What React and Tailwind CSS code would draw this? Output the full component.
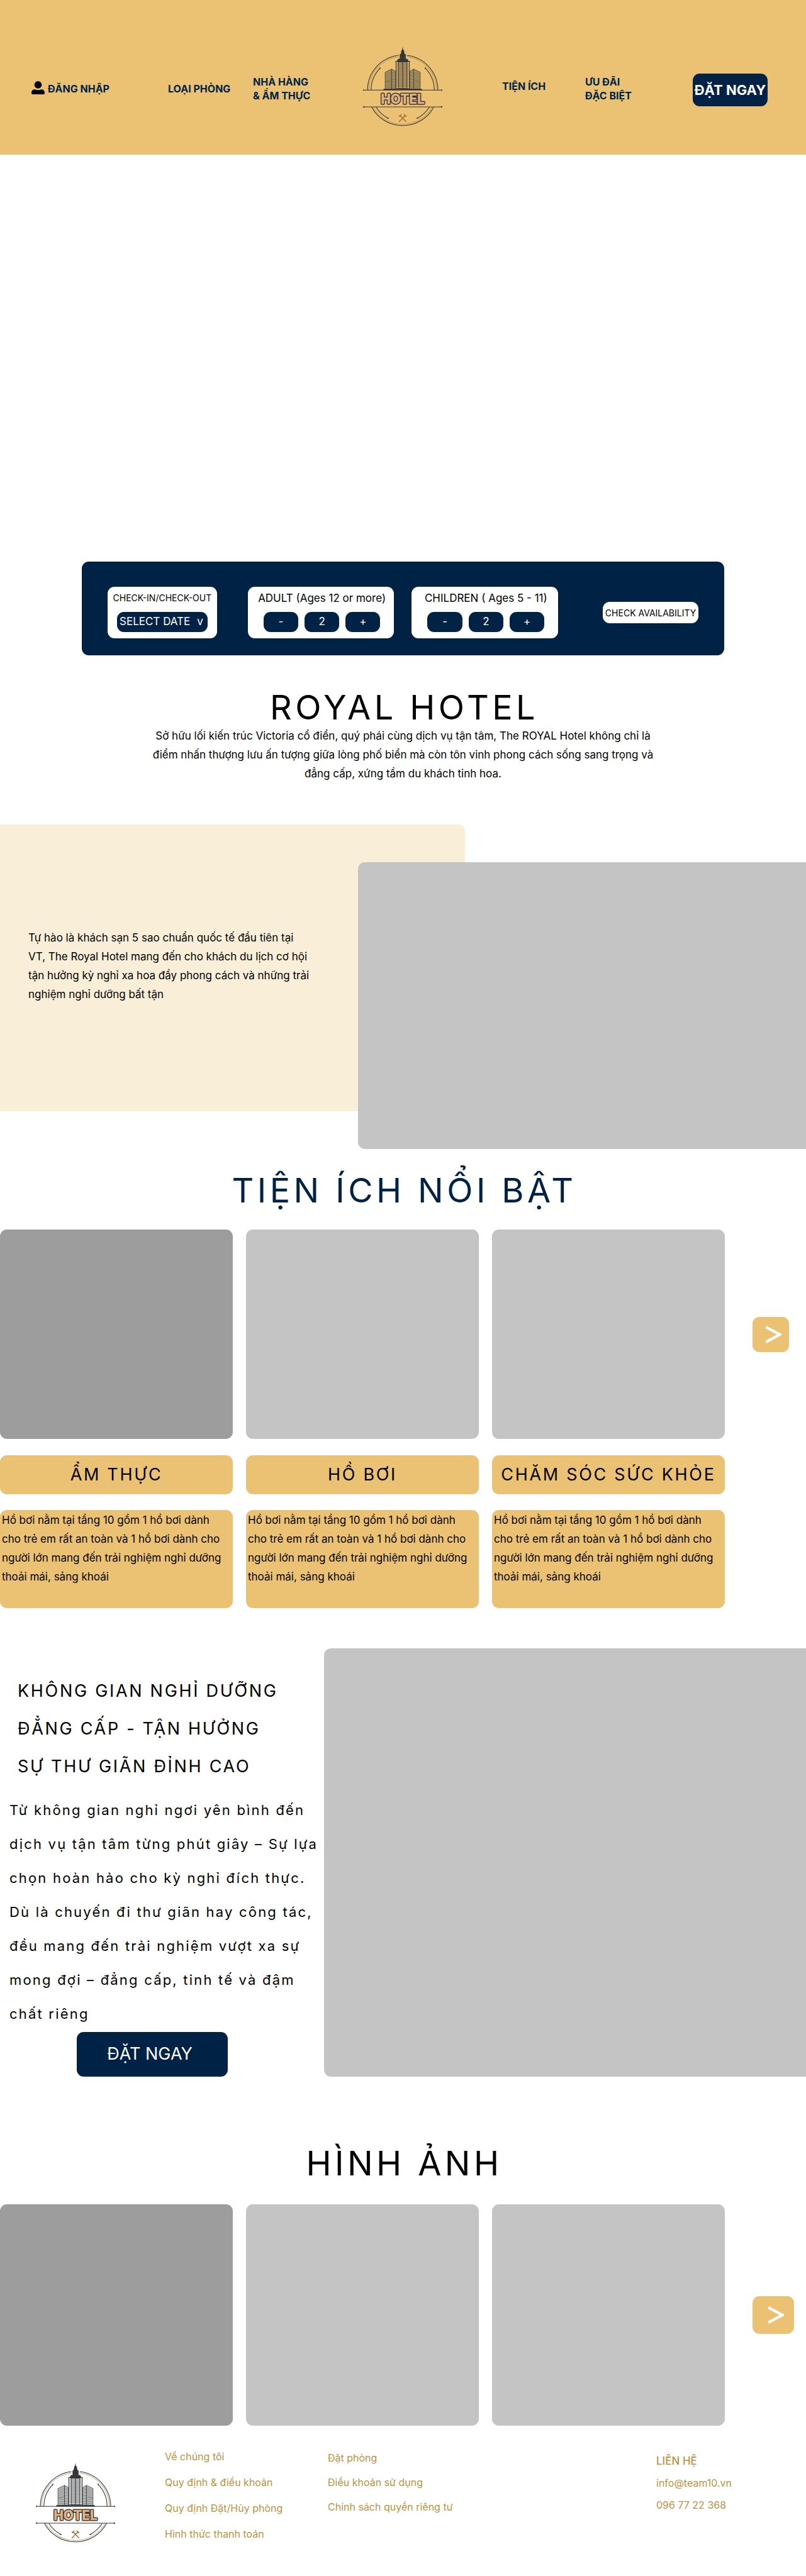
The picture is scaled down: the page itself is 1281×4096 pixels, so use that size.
import React, { useState } from "react";

const facilities = ["ẨM THỰC", "HỒ BƠI", "CHĂM SÓC SỨC KHỎE"];

function HotelLogo({ className }) {
  return (
    <svg viewBox="100 42 700 710" className={className} role="img" aria-label="Hotel">
      <g fill="none" stroke="#343638" strokeWidth="6">
        <path d="M139 432 A311 311 0 0 1 414 125" />
        <path d="M487 125 A311 311 0 0 1 761 432" />
        <path d="M175 580 A311 311 0 0 0 725 580" />
        <path d="M171 430 A279 279 0 0 1 250 238" />
        <path d="M729 430 A279 279 0 0 0 650 238" />
        <path d="M214 582 A279 279 0 0 0 320 680" />
        <path d="M686 582 A279 279 0 0 1 580 680" />
        <path d="M102 432 H798 M102 580 H798" />
      </g>
      <g fill="none" stroke="#b07b3c" strokeWidth="4">
        <path d="M150 432 A300 300 0 0 1 414 136" />
        <path d="M487 136 A300 300 0 0 1 750 432" />
        <path d="M188 580 A300 300 0 0 0 712 580" />
      </g>
      <g fill="#343638">
        <circle cx="250" cy="238" r="6" />
        <circle cx="650" cy="238" r="6" />
        <circle cx="320" cy="680" r="6" />
        <circle cx="580" cy="680" r="6" />
        <circle cx="106" cy="432" r="6" />
        <circle cx="794" cy="432" r="6" />
        <circle cx="106" cy="580" r="6" />
        <circle cx="794" cy="580" r="6" />
        <path d="M450 45 L454 74 L461 80 L468 114 H477 V155 H490 L504 176 H517 V183 H384 V176 H396 L411 155 H424 V114 H433 L439 80 L446 74 Z" />
        <path d="M280 421 H620 V432 H280 Z" />
      </g>
      <g stroke="#343638">
        <path d="M295 274 L353 246 L388 266 V422 H295 Z" fill="#343638" fillOpacity="0.38" strokeWidth="4" />
        <path d="M605 274 L546 246 L512 266 V422 H605 Z" fill="#343638" fillOpacity="0.38" strokeWidth="4" />
        <path
          d="M353 270 L300 296 M353 290 L300 320 M353 312 L300 342 M353 334 L300 360 M353 354 H300 M353 374 L300 366 M353 392 L300 384 M353 410 L300 402 M353 290 L384 272 M353 316 L384 300 M353 342 L384 330 M353 362 H384 M353 382 L384 390 M353 400 L384 412"
          strokeWidth="2.5"
          opacity="0.7"
        />
        <path
          d="M546 270 L600 296 M546 290 L600 320 M546 312 L600 342 M546 334 L600 360 M546 354 H600 M546 374 L600 366 M546 392 L600 384 M546 410 L600 402 M546 290 L516 272 M546 316 L516 300 M546 342 L516 330 M546 362 H516 M546 382 L516 390 M546 400 L516 412"
          strokeWidth="2.5"
          opacity="0.7"
        />
        <path d="M353 246 V422 M546 246 V422" strokeWidth="5" />
        <path d="M412 183 H488 V418 H412 Z" fill="#343638" fillOpacity="0.25" strokeWidth="6" />
        <path d="M391 183 V418 H509 V183" fill="none" strokeWidth="6" />
        <path d="M450 183 V418" strokeWidth="6" />
        <path
          d="M394 196 H506 M394 208 H506 M394 220 H506 M394 232 H506 M394 244 H506 M394 256 H506 M394 268 H506 M394 280 H506 M394 292 H506 M394 304 H506 M394 316 H506 M394 328 H506 M394 340 H506 M394 352 H506 M394 364 H506 M394 376 H506 M394 388 H506 M394 400 H506"
          strokeWidth="3"
          opacity="0.8"
        />
      </g>
      <g
        fontFamily="Inter, sans-serif"
        fontWeight="800"
        fontSize="116"
        textAnchor="middle"
        strokeLinejoin="round"
      >
        <text x="450" y="550" fill="#2d2622" stroke="#2d2622" strokeWidth="16" aria-hidden="true">
          HOTEL
        </text>
        <text x="450" y="550" fill="#deb184" stroke="#deb184" strokeWidth="2">
          HOTEL
        </text>
      </g>
      <g fill="none" stroke="#a06c35" strokeWidth="8">
        <path d="M418 712 L470 658 M482 712 L430 658" />
        <path d="M416 664 L430 654 Q434 648 442 649" strokeWidth="7" />
        <path d="M484 664 L470 654 Q466 648 458 649" strokeWidth="7" />
        <path d="M422 658 L430 668 M478 658 L470 668" strokeWidth="9" />
      </g>
    </svg>
  );
}

function PersonIcon() {
  return (
    <svg viewBox="0 0 38 38" className="h-[21px] w-[21px] shrink-0" aria-hidden="true">
      <circle cx="19" cy="10.8" r="10.6" />
      <path d="M8 24 H11 C15 26.5 23 26.5 27 24 H30 C35 24 38 29 38 34 V35 A3 3 0 0 1 35 38 H3 A3 3 0 0 1 0 35 V34 C0 29 3 24 8 24 Z" />
    </svg>
  );
}

function Stepper({ id, label, className }) {
  const [count, setCount] = useState(2);
  const box = "flex h-8 items-center justify-center rounded-[11px] bg-[#002345] text-white";
  return (
    <div
      role="group"
      aria-labelledby={id}
      className={"rounded-[11px] bg-white pt-[7px] pb-[10px] pl-[25px] pr-[22px] " + className}
    >
      <p id={id} className="-mx-4 text-center text-[17px] leading-[22px]">
        {label}
      </p>
      <div className="mt-[11px] grid grid-cols-3 gap-[10px] text-[17px]">
        <button type="button" className={box} onClick={() => setCount(Math.max(0, count - 1))}>
          -
        </button>
        <output className={box}>{count}</output>
        <button type="button" className={box} onClick={() => setCount(count + 1)}>
          +
        </button>
      </div>
    </div>
  );
}

function Gallery({ tile, arrow }) {
  return (
    <div className="grid grid-cols-[1152fr_129fr] items-center">
      <div className="grid grid-cols-3 gap-[21px]">
        <div className={"rounded-[11px] bg-[#9d9d9d] " + tile} />
        <div className={"rounded-[11px] bg-[#c4c4c4] " + tile} />
        <div className={"rounded-[11px] bg-[#c4c4c4] " + tile} />
      </div>
      <button
        type="button"
        aria-label="Tiếp theo"
        className={"ml-11 flex items-center justify-center rounded-[11px] bg-[#ebc273] pl-2 text-white " + arrow}
      >
        <svg viewBox="0 0 46 52" className="h-7 w-[25px]" fill="none" stroke="currentColor" strokeWidth="8" aria-hidden="true">
          <path d="M0 4 L42 26 L0 48" />
        </svg>
      </button>
    </div>
  );
}

export default function App() {
  return (
    <div className="bg-white font-['Inter',sans-serif] text-base text-black">
      <header className="bg-[#ebc273] pt-[73px] pb-[45px] pl-[50px]">
        <nav className="grid grid-cols-[217fr_135fr_175fr_221fr_132fr_171fr_180fr] items-center text-base leading-[22px] font-bold text-[#002345]">
          <a href="#login" className="flex items-center gap-[5px] pt-2">
            <span className="-mt-1 text-black">
              <PersonIcon />
            </span>
            ĐĂNG NHẬP
          </a>
          <a href="#rooms" className="pt-2">
            LOẠI PHÒNG
          </a>
          <a href="#dining" className="pt-2">
            NHÀ HÀNG
            <br />& ẨM THỰC
          </a>
          <a href="#home">
            <HotelLogo className="h-32 w-[126px]" />
          </a>
          <a href="#facilities">TIỆN ÍCH</a>
          <a href="#offers" className="pt-2">
            ƯU ĐÃI
            <br />
            ĐẶC BIỆT
          </a>
          <button
            type="button"
            className="mt-3 mr-[61px] h-[52px] rounded-[11px] bg-[#002345] text-[22px] whitespace-nowrap text-white"
          >
            ĐẶT NGAY
          </button>
        </nav>
      </header>

      <main>
        <section className="px-[130px] pt-[647px]">
          <form className="grid grid-cols-[223fr_261fr_304fr_152fr] items-center rounded-[11px] bg-[#002345] px-[41px] pt-10 pb-[27px]">
            <div className="mr-[49px] rounded-[11px] bg-white px-[15px] pt-[7px] pb-[10px]">
              <p id="dates" className="-mx-3 text-center text-[14px] leading-[22px]">
                CHECK-IN/CHECK-OUT
              </p>
              <button
                type="button"
                aria-describedby="dates"
                className="mt-[11px] flex h-8 w-full items-center justify-between rounded-[11px] bg-[#002345] px-1 pr-[7px] text-[17px] text-white"
              >
                <span>SELECT DATE</span>
                <span>v</span>
              </button>
            </div>
            <Stepper id="adults" label="ADULT (Ages 12 or more)" className="mr-[28px]" />
            <Stepper id="children" label="CHILDREN ( Ages 5 - 11)" className="mr-[71px]" />
            <button
              type="submit"
              className="h-[34px] rounded-[11px] bg-white text-[14px] whitespace-nowrap"
            >
              CHECK AVAILABILITY
            </button>
          </form>
        </section>

        <section className="mt-[53px] text-center">
          <h1 className="pl-1 text-[54px] leading-[60px] tracking-[0.1em]">ROYAL HOTEL</h1>
          <p className="text-[17px] leading-[30px]">
            Sở hữu lối kiến trúc Victoria cổ điển, quý phái cùng dịch vụ tận tâm, The ROYAL Hotel không chỉ là
            <br />
            điểm nhấn thượng lưu ấn tượng giữa lòng phố biển mà còn tôn vinh phong cách sống sang trọng và
            <br />
            đẳng cấp, xứng tầm du khách tinh hoa.
          </p>
        </section>

        <section className="mt-[66px] grid grid-cols-[569fr_170fr_542fr] grid-rows-[60px_396px_60px]">
          <div className="col-span-2 col-start-1 row-span-2 row-start-1 rounded-tr-[11px] bg-[#f9eed8] pt-[165px] pl-[45px]">
            <p className="text-[17px] leading-[30px]">
              Tự hào là khách sạn 5 sao chuẩn quốc tế đầu tiên tại
              <br />
              VT, The Royal Hotel mang đến cho khách du lịch cơ hội
              <br />
              tận hưởng kỳ nghỉ xa hoa đầy phong cách và những trải
              <br />
              nghiệm nghỉ dưỡng bất tận
            </p>
          </div>
          <div className="col-span-2 col-start-2 row-span-2 row-start-2 rounded-l-[11px] bg-[#c4c4c4]" />
        </section>

        <section className="mt-9">
          <h2 className="pl-1 text-center text-[54px] leading-[60px] tracking-[0.1em] text-[#002345]">
            TIỆN ÍCH NỔI BẬT
          </h2>
          <div className="mt-8">
            <Gallery tile="h-[333px]" arrow="h-14 w-[58px]" />
          </div>
          <div className="mt-[26px] grid grid-cols-[1152fr_129fr]">
            <div className="grid grid-cols-3 gap-[21px]">
              {facilities.map((name) => (
                <article key={name}>
                  <h3 className="rounded-[11px] bg-[#ebc273] py-[1px] text-center text-[27px] leading-[60px] tracking-[0.1em] whitespace-nowrap">
                    {name}
                  </h3>
                  <p className="mt-[25px] rounded-[11px] bg-[#ebc273] pt-px pb-[35px] pl-[3px] text-[17px] leading-[30px]">
                    Hồ bơi nằm tại tầng 10 gồm 1 hồ bơi dành
                    <br />
                    cho trẻ em rất an toàn và 1 hồ bơi dành cho
                    <br />
                    người lớn mang đến trải nghiệm nghỉ dưỡng
                    <br />
                    thoải mái, sảng khoái
                  </p>
                </article>
              ))}
            </div>
          </div>
        </section>

        <section className="mt-16 grid grid-cols-[515fr_766fr]">
          <div className="pt-[38px] whitespace-nowrap">
            <h2 className="pl-7 text-[27px] leading-[60px] tracking-[0.1em]">
              KHÔNG GIAN NGHỈ DƯỠNG
              <br />
              ĐẲNG CẤP - TẬN HƯỞNG
              <br />
              SỰ THƯ GIÃN ĐỈNH CAO
            </h2>
            <p className="mt-3 pl-[15px] text-[22px] leading-[54px] tracking-[0.1em]">
              Từ không gian nghỉ ngơi yên bình đến
              <br />
              dịch vụ tận tâm từng phút giây – Sự lựa
              <br />
              chọn hoàn hảo cho kỳ nghỉ đích thực.
              <br />
              Dù là chuyến đi thư giãn hay công tác,
              <br />
              đều mang đến trải nghiệm vượt xa sự
              <br />
              mong đợi – đẳng cấp, tinh tế và đậm
              <br />
              chất riêng
            </p>
            <button
              type="button"
              className="mt-[2px] ml-[122px] block h-[71px] w-60 rounded-[11px] bg-[#002345] pr-2 text-[27px] text-white"
            >
              ĐẶT NGAY
            </button>
          </div>
          <div className="rounded-l-[11px] bg-[#c4c4c4]" />
        </section>

        <section className="mt-[108px]">
          <h2 className="pl-1 text-center text-[54px] leading-[60px] tracking-[0.1em]">HÌNH ẢNH</h2>
          <div className="mt-[35px]">
            <Gallery tile="h-[352px]" arrow="h-[60px] w-[66px]" />
          </div>
        </section>
      </main>

      <footer className="grid grid-cols-[205fr_259fr_522fr_238fr] pb-[53px] pl-[57px] text-base leading-5 text-[#bd9140]">
        <HotelLogo className="mt-[58px] h-32 w-[126px]" />
        <ul className="mt-[39px] space-y-[21px]">
          <li>
            <a href="#about">Về chúng tôi</a>
          </li>
          <li>
            <a href="#terms">Quy định & điều khoản</a>
          </li>
          <li>
            <a href="#cancellation">Quy định Đặt/Hủy phòng</a>
          </li>
          <li>
            <a href="#payment">Hình thức thanh toán</a>
          </li>
        </ul>
        <ul className="mt-[41px] space-y-[19px]">
          <li>
            <a href="#booking">Đặt phòng</a>
          </li>
          <li>
            <a href="#usage">Điều khoản sử dụng</a>
          </li>
          <li>
            <a href="#privacy">Chính sách quyền riêng tư</a>
          </li>
        </ul>
        <address className="mt-[46px] space-y-[15px] not-italic">
          <h2 className="text-[17px] font-medium">LIÊN HỆ</h2>
          <p>
            <a href="mailto:info@team10.vn">info@team10.vn</a>
          </p>
          <p>
            <a href="tel:0967722368">096 77 22 368</a>
          </p>
        </address>
      </footer>
    </div>
  );
}
